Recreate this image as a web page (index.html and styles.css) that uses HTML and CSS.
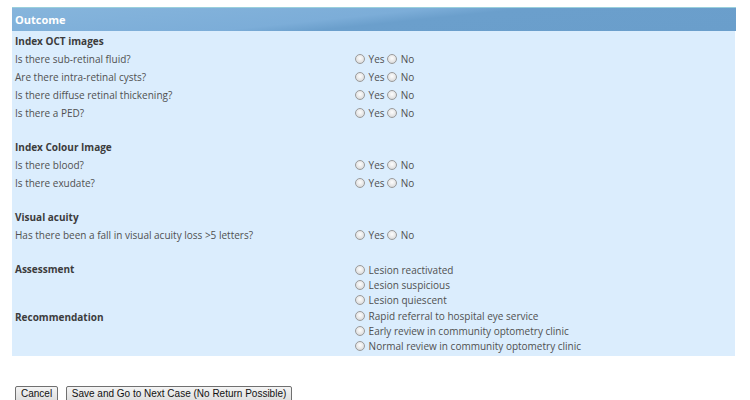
FILE: index.html
```html
<html>
<head>
    <title>Outcome</title>
    <meta charset="UTF-8">
<link rel="stylesheet" href="styles.css">
</head>
<body>
    <div id="wrapper">
        <div id="outcomeHeader">Outcome</div>
        <div id="outcomePanel">
            <div class="section">
                <div class="sectionTitle">Index OCT images</div>
                <div class="row">
                    <div class="question">Is there sub-retinal fluid?</div>
                    <div class="answers"><label><input type="radio" name="q1"> Yes</label> <label><input type="radio" name="q1"> No</label></div>
                </div>
                <div class="row">
                    <div class="question">Are there intra-retinal cysts?</div>
                    <div class="answers"><label><input type="radio" name="q2"> Yes</label> <label><input type="radio" name="q2"> No</label></div>
                </div>
                <div class="row">
                    <div class="question">Is there diffuse retinal thickening?</div>
                    <div class="answers"><label><input type="radio" name="q3"> Yes</label> <label><input type="radio" name="q3"> No</label></div>
                </div>
                <div class="row">
                    <div class="question">Is there a PED?</div>
                    <div class="answers"><label><input type="radio" name="q4"> Yes</label> <label><input type="radio" name="q4"> No</label></div>
                </div>
            </div>
            <div class="section">
                <div class="sectionTitle">Index Colour Image</div>
                <div class="row">
                    <div class="question">Is there blood?</div>
                    <div class="answers"><label><input type="radio" name="q5"> Yes</label> <label><input type="radio" name="q5"> No</label></div>
                </div>
                <div class="row">
                    <div class="question">Is there exudate?</div>
                    <div class="answers"><label><input type="radio" name="q6"> Yes</label> <label><input type="radio" name="q6"> No</label></div>
                </div>
            </div>
            <div class="section">
                <div class="sectionTitle">Visual acuity</div>
                <div class="row">
                    <div class="question">Has there been a fall in visual acuity loss &gt;5 letters?</div>
                    <div class="answers"><label><input type="radio" name="q7"> Yes</label> <label><input type="radio" name="q7"> No</label></div>
                </div>
            </div>
            <div class="section listSection assessment">
                <div class="sectionTitle">Assessment</div>
                <div class="optionList">
                    <label><input type="radio" name="assess"> Lesion reactivated</label>
                    <label><input type="radio" name="assess"> Lesion suspicious</label>
                    <label><input type="radio" name="assess"> Lesion quiescent</label>
                </div>
            </div>
            <div class="section listSection recommendation">
                <div class="sectionTitle">Recommendation</div>
                <div class="optionList">
                    <label><input type="radio" name="recommend"> Rapid referral to hospital eye service</label>
                    <label><input type="radio" name="recommend"> Early review in community optometry clinic</label>
                    <label><input type="radio" name="recommend"> Normal review in community optometry clinic</label>
                </div>
            </div>
        </div>
        <div id="buttonBar">
            <button type="button" class="formButton">Cancel</button>
            <button type="button" class="formButton">Save and Go to Next Case (No Return Possible)</button>
        </div>
    </div>
</body>
</html>
```

FILE: styles.css
```css
body {
    margin: 0;
    padding: 0;
    background-color: #fff;
    font-family: "Open Sans", "Noto Sans", sans-serif;
    font-size: 10px;
    color: #505050;
}

#wrapper {
    padding: 7px 14px 0 12px;
}

#outcomeHeader {
    height: 23px;
    line-height: 23px;
    padding-left: 3px;
    border-top: 1px solid #9ad0dc;
    background: linear-gradient(174deg, #86b5dc 0%, #7cadd8 45%, #6b9fcc 55%, #6a9ecb 100%);
    color: #fff;
    font-weight: bold;
    font-size: 11px;
}

#outcomePanel {
    background-color: #dbedfd;
    padding: 1px 3px 2px 3px;
    margin-right: 1px;
}

.section {
    margin-bottom: 16px;
}

.sectionTitle {
    height: 18px;
    line-height: 18px;
    font-weight: bold;
    color: #3c3c3c;
}

.row {
    display: grid;
    grid-template-columns: 340px 1fr;
    height: 18px;
    line-height: 18px;
}

.listSection {
    display: grid;
    grid-template-columns: 340px 1fr;
}

.assessment {
    margin-bottom: 0;
}

.assessment .optionList {
    padding-top: 3px;
}

.recommendation {
    margin-bottom: 0;
}

.recommendation .optionList {
    padding-top: 1px;
}

.optionList label {
    display: block;
    height: 15px;
    line-height: 15px;
}

input[type="radio"] {
    appearance: none;
    -webkit-appearance: none;
    width: 10px;
    height: 10px;
    margin: 0 1px 0 0;
    border: 1px solid #9a9a9a;
    border-radius: 50%;
    background: radial-gradient(circle at 50% 40%, #fdfdfd 0%, #e4e4e4 60%, #c8c8c8 100%);
    vertical-align: -1px;
}

#buttonBar {
    margin-top: 30px;
    padding-left: 3px;
}

.formButton {
    font-family: "Liberation Sans", Arial, sans-serif;
    font-size: 10px;
    color: #111;
    height: 16px;
    padding: 0 5px 1px 5px;
    margin-right: 5px;
    border: 1px solid #707070;
    border-radius: 2px;
    background: linear-gradient(#f4f4f4, #dedede);
}
```
